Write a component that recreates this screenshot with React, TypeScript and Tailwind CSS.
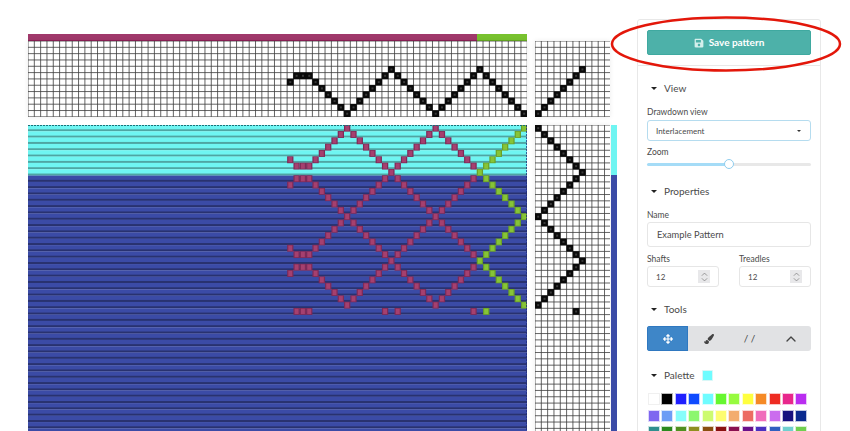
import { ChevronUp } from 'lucide-react';
import { FaArrowsAlt, FaPaintBrush, FaSave } from 'react-icons/fa';

const CELL = 6.32;
const COLS = 79;
const ROWS = 50;
const CYAN = '#6ff5f2';
const BLUE = '#3b4ba6';

// threading: column -> shaft row counted from the top
const threading: Record<number, number> = {};
const threadingSeq = [6, 5, 5, 5, 6, 7, 8, 9, 10, 11, 10, 9, 8, 7, 6, 5, 4, 5, 6, 7, 8, 9, 10, 11, 10, 9, 8, 7, 6, 5, 4, 5, 6, 7, 8, 9, 10, 11];
threadingSeq.forEach((row, i) => {
    threading[41 + i] = row;
});

// treadling: row -> treadle column
const treadling = [0, 1, 2, 3, 4, 5, 6, 7, 6, 5, 4, 3, 2, 1, 0, 1, 2, 3, 4, 5, 6, 7, 6, 5, 4, 3, 2, 1, 0, 6];

const tieUp = [0, 1, 2, 3, 4, 5, 6, 7];

const palette = [
    ['#ffffff', '#000000', '#1f1fff', '#0f4bff', '#6ffcff', '#66f72f', '#97fb3f', '#ffff3f', '#f58a26', '#ee2c22', '#e8278c', '#b92df0'],
    ['#7e66f0', '#6d9df5', '#86fdfb', '#8cf76f', '#cdfb70', '#fdfd70', '#f3ad6f', '#ec6c63', '#f06cbb', '#cb6cee', '#17107f', '#0a2a8f'],
    ['#2f8f8f', '#2a8a1f', '#4f8f1f', '#8f8f1f', '#8a4f10', '#8a1010', '#8a0f50', '#6a108a', '#4a2fc0', '#2f5fc0', '#6fcfcf', '#6fcf4f'],
];

function Grid({ cols, rows, cells }: { cols: number; rows: number; cells: [number, number][] }) {
    const width = cols * CELL;
    const height = rows * CELL;
    return (
        <svg width={width} height={height} className="block bg-white shadow-[0_0_5px_rgba(0,0,0,0.08)]">
            {Array.from({ length: cols + 1 }, (_, i) => (
                <line key={i} x1={i * CELL} x2={i * CELL} y1={0} y2={height} stroke="#3c3c3c" strokeWidth={0.8} />
            ))}
            {Array.from({ length: rows + 1 }, (_, i) => (
                <line key={i} x1={0} x2={width} y1={i * CELL} y2={i * CELL} stroke="#3c3c3c" strokeWidth={0.8} />
            ))}
            {cells.map(([c, r]) => (
                <g key={`${c}-${r}`}>
                    <rect x={c * CELL - 0.2} y={r * CELL - 0.2} width={CELL + 0.4} height={CELL + 0.4} fill="#0a0a0a" />
                    <rect x={c * CELL + 2.2} y={r * CELL + 2.2} width={2} height={2} fill="#3a3a3a" />
                </g>
            ))}
        </svg>
    );
}

function Drawdown() {
    const width = COLS * CELL;
    const height = ROWS * CELL;
    const cells: { c: number; r: number }[] = [];
    treadling.forEach((t, r) => {
        for (let c = 0; c < COLS; c++) {
            if (threading[c] === 11 - t) cells.push({ c, r });
        }
    });
    return (
        <svg width={width} height={height} className="block">
            {Array.from({ length: ROWS }, (_, r) => (
                <g key={r}>
                    <rect x={0} y={r * CELL} width={width} height={CELL} fill={r < 8 ? CYAN : BLUE} />
                    <rect x={0} y={r * CELL + 4.3} width={width} height={2} fill={r < 8 ? '#4fa5a3' : '#29326f'} />
                </g>
            ))}
            {cells.map(({ c, r }) => (
                <g key={`${c}-${r}`}>
                    <rect x={c * CELL} y={r * CELL - 0.3} width={CELL} height={CELL + 0.6} fill={c < 71 ? '#7f2a58' : '#6aa028'} />
                    <rect x={c * CELL + 1.2} y={r * CELL + 0.4} width={3.9} height={5.4} fill={c < 71 ? '#a5406f' : '#86c437'} />
                </g>
            ))}
            <line x1={0} x2={width} y1={0.5} y2={0.5} stroke="#1c6f78" strokeDasharray="2 1" />
            <line x1={width - 0.5} x2={width - 0.5} y1={0} y2={height} stroke="#1d2a7a" strokeDasharray="2 1" />
        </svg>
    );
}

function Section({ title, children }: { title: string; children?: React.ReactNode }) {
    return (
        <div className="flex h-[14px] items-center text-[10px] leading-[14px] text-[#4a4a4a]">
            <span className="ml-[3.5px] h-0 w-0 border-x-[3px] border-t-[3.5px] border-x-transparent border-t-[#222]" />
            <span className="ml-[7.5px]">{title}</span>
            {children}
        </div>
    );
}

function Label({ text }: { text: string }) {
    return <div className="h-[12px] text-[8.5px] leading-[12px] text-[#4a4a4a]">{text}</div>;
}

function NumberField({ label }: { label: string }) {
    return (
        <div className="w-[72px]">
            <Label text={label} />
            <div className="mt-[1px] flex h-[21px] items-center justify-between rounded-[3px] border border-[#e6e6e6] px-[8px] text-[8px] text-[#4a4a4a]">
                <span>12</span>
                <span className="flex h-[13px] w-[12px] items-center justify-center bg-[#e8e8ea] text-[#777]">
                    <svg width="7" height="10" viewBox="0 0 8 11" fill="none" stroke="currentColor" strokeWidth="0.8">
                        <path d="M1 4 L4 1 L7 4" />
                        <path d="M1 7 L4 10 L7 7" />
                    </svg>
                </span>
            </div>
        </div>
    );
}

export default function App() {
    const threadCells = Object.entries(threading).map(([c, r]) => [Number(c), r] as [number, number]);
    const tieCells = tieUp.map((c) => [c, 11 - c] as [number, number]);
    const treadleCells = treadling.map((t, r) => [t, r] as [number, number]);

    return (
        <main className="relative flex h-[431px] w-[850px] overflow-hidden bg-white font-['Lato','Open_Sans',sans-serif]">
            <div className="ml-[28px] mt-[34px] w-[609px] shrink-0 blur-[0.25px]">
                <div className="grid grid-cols-[499.28px_auto] gap-x-[7.4px]">
                    <div className="flex h-[7px]">
                        <div className="w-[448.7px] border-b border-[#8a1f55] bg-[#a0396b]" />
                        <div className="w-[50.6px] border-b border-[#65a624] bg-[#78c22f]" />
                    </div>
                    <div />
                    <Grid cols={COLS} rows={12} cells={threadCells} />
                    <Grid cols={12} rows={12} cells={tieCells} />
                    <div className="mt-[7.7px]">
                        <Drawdown />
                    </div>
                    <div className="mt-[7.7px] flex gap-[0.5px]">
                        <Grid cols={12} rows={ROWS} cells={treadleCells} />
                        <div className="w-[6.5px]">
                            <div className="h-[50.5px] bg-[#6ff5f2]" />
                            <div className="h-[266px] bg-[#3b4ba6]" />
                        </div>
                    </div>
                </div>
            </div>

            <aside className="mt-[19px] h-[440px] w-[184px] shrink-0 rounded-[3px] border border-[#e8e8e8]">
                <div className="border-b border-[#e8e8e8] px-[9px] pt-[10px] pb-[10px]">
                    <button className="flex h-[25px] w-[164px] items-center justify-center gap-[5px] rounded-[2px] border border-[#3fa9a0] bg-[#4db1a9] text-[10px] font-bold text-white">
                        <FaSave size={10} color="#d4efec" />
                        Save pattern
                    </button>
                </div>

                <div className="px-[9px] pt-[15px]">
                    <Section title="View" />
                    <div className="mt-[11px]">
                        <Label text="Drawdown view" />
                    </div>
                    <div className="mt-[2px] flex h-[21px] items-center justify-between rounded-[3px] border border-[#b5dcef] px-[8px] text-[8px] text-[#4a4a4a]">
                        Interlacement
                        <span className="mr-[1px] h-0 w-0 border-x-[2px] border-t-[2.5px] border-x-transparent border-t-[#333]" />
                    </div>
                    <div className="mt-[5px]">
                        <Label text="Zoom" />
                    </div>
                    <div className="relative mt-[1px] flex h-[10px] w-[164px] items-center">
                        <div className="h-[3px] w-[82px] rounded-l bg-[#a5dcf7]" />
                        <div className="h-[3px] flex-1 rounded-r bg-[#e8e8e8]" />
                        <div className="absolute left-[77px] h-[10px] w-[10px] rounded-full border border-[#8fcdee] bg-white" />
                    </div>

                    <div className="mt-[15px]">
                        <Section title="Properties" />
                    </div>
                    <div className="mt-[11px]">
                        <Label text="Name" />
                    </div>
                    <div className="mt-[1px] flex h-[25px] items-center rounded-[3px] border border-[#e6e6e6] px-[9px] text-[9.3px] text-[#4a4a4a]">
                        Example Pattern
                    </div>
                    <div className="mt-[6px] flex justify-between">
                        <NumberField label="Shafts" />
                        <NumberField label="Treadles" />
                    </div>

                    <div className="mt-[15px]">
                        <Section title="Tools" />
                    </div>
                    <div className="mt-[10px] flex h-[25px] overflow-hidden rounded-[3px] bg-[#e1e2e4] text-[#444]">
                        <div className="flex w-[41px] items-center justify-center border border-[#2f78c0] bg-[#3e86c8] text-white">
                            <FaArrowsAlt size={10} />
                        </div>
                        <div className="flex w-[41px] items-center justify-center">
                            <FaPaintBrush size={10} />
                        </div>
                        <div className="flex w-[41px] items-center justify-center text-[10px]">/ /</div>
                        <div className="flex w-[41px] items-center justify-center">
                            <ChevronUp size={16} strokeWidth={2} />
                        </div>
                    </div>

                    <div className="mt-[17px]">
                        <Section title="Palette">
                            <span className="ml-[7px] h-[11px] w-[11px] rounded-[1px] border border-[#d9f7f7] bg-[#6ffcff]" />
                        </Section>
                    </div>
                    <div className="mt-[12px] flex flex-col gap-[6.5px]">
                        {palette.map((row, i) => (
                            <div key={i} className="ml-[2px] flex gap-[3.4px]">
                                {row.map((color) => (
                                    <span
                                        key={color}
                                        className="h-[10px] w-[10px]"
                                        style={{
                                            backgroundColor: color,
                                            boxShadow: color === '#ffffff' ? '0 0 0 1px #f0f0f0' : `0 0 0 1px ${color}44`,
                                        }}
                                    />
                                ))}
                            </div>
                        ))}
                    </div>
                </div>
            </aside>

            <svg width="240" height="62" className="absolute left-[606px] top-[13px]" fill="none">
                <ellipse cx="120" cy="31" rx="114" ry="26.5" stroke="#e3170a" strokeWidth="2.5" />
            </svg>
        </main>
    );
}
